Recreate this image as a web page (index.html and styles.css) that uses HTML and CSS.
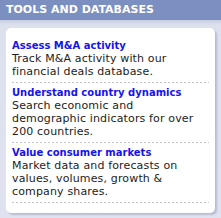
FILE: index.html
```html
<!DOCTYPE html>
<html>
<head>
<meta charset="utf-8">
<link rel="stylesheet" href="styles.css">
</head>
<body>
<div class="widget">
  <div class="header">TOOLS AND DATABASES</div>
  <div class="panel">
    <div class="card">
      <div class="item">
        <a class="title" href="#">Assess M&amp;A activity</a>
        <p class="desc">Track M&amp;A activity with our financial deals database.</p>
      </div>
      <div class="item">
        <a class="title" href="#">Understand country dynamics</a>
        <p class="desc">Search economic and demographic indicators for over 200 countries.</p>
      </div>
      <div class="item">
        <a class="title" href="#">Value consumer markets</a>
        <p class="desc">Market data and forecasts on values, volumes, growth &amp; company shares.</p>
      </div>
    </div>
  </div>
</div>
</body>
</html>
```

FILE: styles.css
```css
html, body {
  margin: 0;
  padding: 0;
}
body {
  background: #e0e3ef;
  font-family: "DejaVu Sans", Verdana, sans-serif;
  width: 221px;
  height: 218px;
  overflow: hidden;
}
.widget {
  width: 221px;
}
.header {
  height: 20px;
  line-height: 20px;
  background: #7b8fc1;
  color: #ffffff;
  font-weight: bold;
  font-size: 11px;
  padding-left: 6px;
  white-space: nowrap;
}
.panel {
  background: linear-gradient(#c7cde1 0px, #dde1ee 5px, #e0e3ef 100%);
  padding: 8px 6px 5px 6px;
  height: 198px;
  box-sizing: border-box;
}
.card {
  background: #ffffff;
  border-radius: 5px;
  box-shadow: 2px 2px 2px rgba(130, 140, 180, 0.45);
  padding: 8px 6px 10px 6px;
}
.item {
  padding: 3px 0 5px 0;
  background-image: linear-gradient(to right, #c4c4cc 0, #c4c4cc 2px, transparent 2px, transparent 4px);
  background-size: 4px 1px;
  background-repeat: repeat-x;
  background-position: left bottom;
}
.title {
  display: block;
  font-size: 10px;
  font-weight: bold;
  line-height: 13px;
  color: #1414ee;
  text-decoration: none;
  white-space: nowrap;
}
.desc {
  margin: 0;
  font-size: 11px;
  letter-spacing: 0.15px;
  line-height: 13px;
  color: #1c1c1c;
}
```
